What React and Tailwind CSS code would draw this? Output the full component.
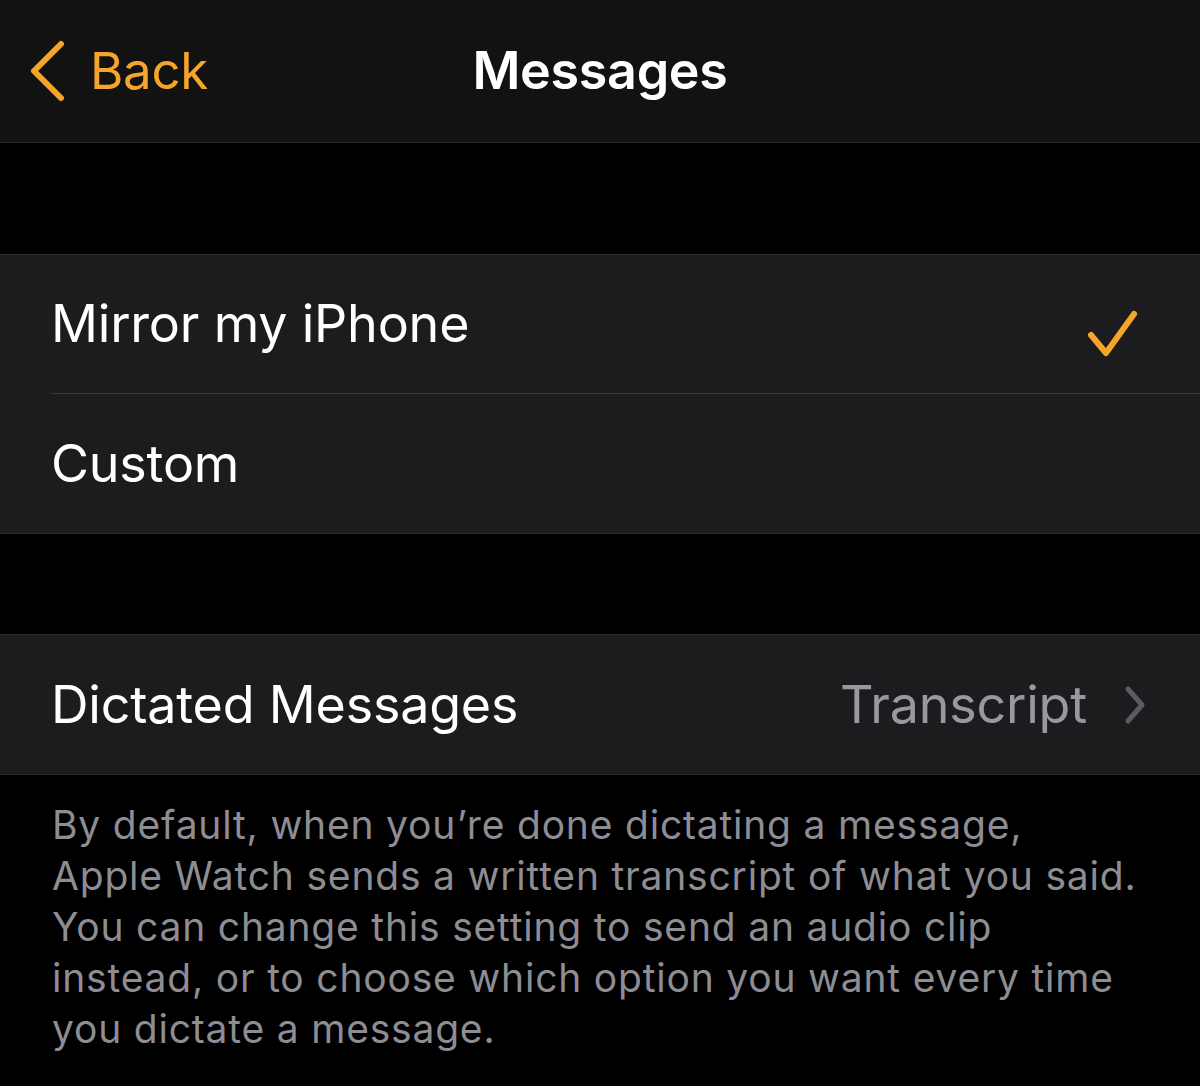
import React from 'react';

const font = { fontFamily: 'Inter, "Noto Sans", sans-serif' };

function Row({ label, right, last }) {
  return (
    <div className="flex h-[139px] items-center bg-[#1c1c1e] pl-[51px]">
      <div className={`flex h-full flex-1 items-center pr-[64px] ${last ? '' : 'border-b border-[#38383a]'}`}>
        <span className="flex-1 text-[52px] text-white tracking-[-0.2px]">{label}</span>
        {right}
      </div>
    </div>
  );
}

export default function App() {
  return (
    <div className="min-h-[1086px] w-[1200px] bg-black" style={font}>
      <header className="relative flex h-[143px] items-center border-b border-[#2c2c2e] bg-[#121212]">
        <button className="flex items-center gap-[24px] pl-[28px] text-[#f5a52a]">
          <svg width="38" height="62" viewBox="0 0 38 62" fill="none">
            <path d="M33 4 L6 31 L33 58" stroke="currentColor" strokeWidth="6" strokeLinecap="round" strokeLinejoin="round" />
          </svg>
          <span className="text-[51px] tracking-[-0.3px]">Back</span>
        </button>
        <h1 className="absolute left-1/2 -translate-x-1/2 text-[52px] font-semibold text-white tracking-[-0.3px]">Messages</h1>
      </header>

      <div className="h-[111px]" />

      <section className="border-y border-[#2c2c2e]">
        <Row
          label="Mirror my iPhone"
          right={
            <svg width="52" height="50" viewBox="0 0 52 50" fill="none" className="mr-[-3px] mt-[20px]">
              <path d="M4 26 L19 44 L47 5" stroke="#f5a52a" strokeWidth="6" strokeLinecap="round" strokeLinejoin="round" />
            </svg>
          }
        />
        <Row label="Custom" last />
      </section>

      <div className="h-[100px]" />

      <section className="border-y border-[#2c2c2e]">
        <Row
          label="Dictated Messages"
          last
          right={
            <div className="flex items-center gap-[37px] mr-[-10px]">
              <span className="text-[52px] text-[#98989e] tracking-[-0.2px]">Transcript</span>
              <svg width="22" height="40" viewBox="0 0 22 40" fill="none">
                <path d="M4 4 L18 20 L4 36" stroke="#5b5b60" strokeWidth="5" strokeLinecap="round" strokeLinejoin="round" />
              </svg>
            </div>
          }
        />
      </section>

      <p className="pl-[52px] pt-[24px] text-[39px] leading-[51px] text-[#8d8d93] tracking-[0.8px] whitespace-nowrap">
        By default, when you’re done dictating a message,
        <br />
        Apple Watch sends a written transcript of what you said.
        <br />
        You can change this setting to send an audio clip
        <br />
        instead, or to choose which option you want every time
        <br />
        you dictate a message.
      </p>
    </div>
  );
}
